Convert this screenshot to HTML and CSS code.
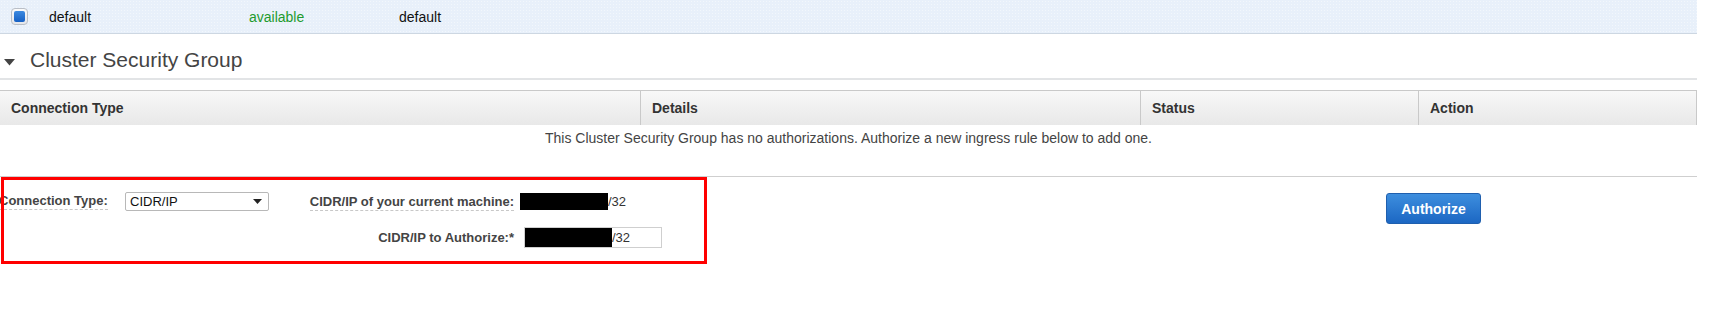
FILE: index.html
```html
<!DOCTYPE html>
<html>
<head>
<meta charset="utf-8">
<link rel="stylesheet" href="styles.css">
</head>
<body>
<div class="page">
  <div class="row-top">
    <span class="cb"><span class="cb-in"></span></span>
    <span class="c-name">default</span>
    <span class="c-status">available</span>
    <span class="c-group">default</span>
  </div>

  <div class="section-head">
    <svg class="caret" width="11" height="7" viewBox="0 0 11 7"><path d="M0 0H11L5.5 6.5Z" fill="#444"/></svg>
    <h2>Cluster Security Group</h2>
  </div>

  <div class="table">
    <div class="thead">
      <div class="th th1">Connection Type</div>
      <div class="th">Details</div>
      <div class="th">Status</div>
      <div class="th">Action</div>
    </div>
    <div class="empty">This Cluster Security Group has no authorizations. Authorize a new ingress rule below to add one.</div>
  </div>

  <div class="form-area">
    <div class="form-grid">
      <label class="lbl lbl-first u">Connection Type:</label>
      <div class="select"><span>CIDR/IP</span><svg width="9" height="5" viewBox="0 0 9 5"><path d="M0 0H9L4.5 5Z" fill="#222"/></svg></div>
      <label class="lbl lbl-right"><span class="u">CIDR/IP of your current machine:</span></label>
      <div class="val"><span class="redact r1"></span><span>/32</span></div>

      <span></span><span></span>
      <label class="lbl lbl-right row2">CIDR/IP to Authorize:*</label>
      <div class="val row2"><div class="input"><span class="redact r2"></span><span>/32</span></div></div>
    </div>
    <div class="action"><button class="btn">Authorize</button></div>
    <div class="highlight"></div>
  </div>
</div>
</body>
</html>
```

FILE: styles.css
```css
* { box-sizing: border-box; }
html, body { margin: 0; padding: 0; background: #fff; }
body {
  font-family: "Liberation Sans", Arial, sans-serif;
  font-size: 13px;
  color: #333;
  width: 1714px;
  height: 324px;
  overflow: hidden;
}
.page { width: 1697px; }

.row-top {
  height: 34px;
  background-color: #e8f0fa;
  background-image: radial-gradient(circle, rgba(255,255,255,0.45) 0.6px, transparent 0.8px);
  background-size: 3px 3px;
  border-bottom: 1px solid #cdd7e2;
  display: flex;
  align-items: center;
  font-size: 14px;
  color: #111;
}
.cb {
  width: 17px; height: 17px;
  margin-left: 11px;
  margin-top: -1px;
  border: 1px solid #b9bec6;
  border-radius: 4px;
  background: linear-gradient(#fbfbfb, #e4e6ea);
  display: flex; align-items: center; justify-content: center;
}
.cb-in {
  width: 11px; height: 11px;
  border-radius: 2px;
  background: linear-gradient(#3d8ae0, #1660c4);
}
.c-name { margin-left: 21px; width: 200px; }
.c-status { width: 150px; color: #1e9b2e; }

.section-head {
  height: 46px;
  display: flex;
  align-items: center;
  padding-top: 8px;
  border-bottom: 2px solid #e2e4e6;
}
.caret { margin-left: 4px; margin-top: 4px; }
.section-head h2 {
  margin: 0 0 0 15px;
  font-weight: normal;
  font-size: 21px;
  color: #444;
}

.table { margin-top: 10px; }
.thead {
  display: grid;
  grid-template-columns: 640px 500px 278px 279px;
  height: 35px;
  border-top: 1px solid #c9c9c9;
  background: linear-gradient(#f8f8f8, #e8e8e8);
}
.th {
  border-left: 1px solid #c9c9c9;
  padding-left: 11px;
  font-weight: bold;
  font-size: 14px;
  color: #333;
  line-height: 34px;
}
.th:last-child { border-right: 1px solid #c9c9c9; }
.th1 { border-left: none; }
.empty {
  text-align: center;
  color: #444;
  font-size: 14px;
  line-height: 26px;
  height: 26px;
}

.form-area {
  position: relative;
  margin-top: 25px;
  border-top: 1px solid #cfcfcf;
  height: 100px;
  display: flex;
  align-items: flex-start;
}
.form-grid {
  display: grid;
  grid-template-columns: 125px 144px 245px auto;
  grid-template-rows: 35px 37px;
  align-items: center;
  padding-top: 7px;
  width: 700px;
}
.lbl {
  font-weight: bold;
  color: #444;
  font-size: 13px;
}
.lbl-first { margin-left: -1px; justify-self: start; }
.u { border-bottom: 1px dashed #c8c8c8; padding-bottom: 1px; }
.lbl-right { text-align: right; }
.select {
  width: 144px;
  height: 19px;
  border: 1px solid #b8b8b8;
  border-radius: 2px;
  background: #fff;
  display: flex;
  align-items: center;
  justify-content: space-between;
  padding: 0 6px 0 4px;
  font-size: 13px;
  color: #111;
}
.val { display: flex; align-items: center; margin-left: 6px; font-size: 13px; color: #333; }
.redact { display: inline-block; background: #000; }
.r1 { width: 88px; height: 17px; }
.input {
  margin-left: 4px;
  width: 138px;
  height: 21px;
  border: 1px solid #cfcfcf;
  display: flex;
  align-items: center;
  background: #fff;
}
.r2 { width: 87px; height: 19px; }
.action { margin-left: 686px; padding-top: 16px; }
.btn {
  width: 95px;
  height: 31px;
  border: 1px solid #1f5fae;
  border-radius: 3px;
  background: linear-gradient(#3d8ede, #1c67c3);
  color: #fff;
  font-family: "Liberation Sans", Arial, sans-serif;
  font-weight: bold;
  font-size: 14px;
  padding: 0;
}
.highlight {
  position: absolute;
  left: 1px;
  top: 0;
  width: 706px;
  height: 87px;
  border: 3px solid #ff0000;
  pointer-events: none;
}
```
